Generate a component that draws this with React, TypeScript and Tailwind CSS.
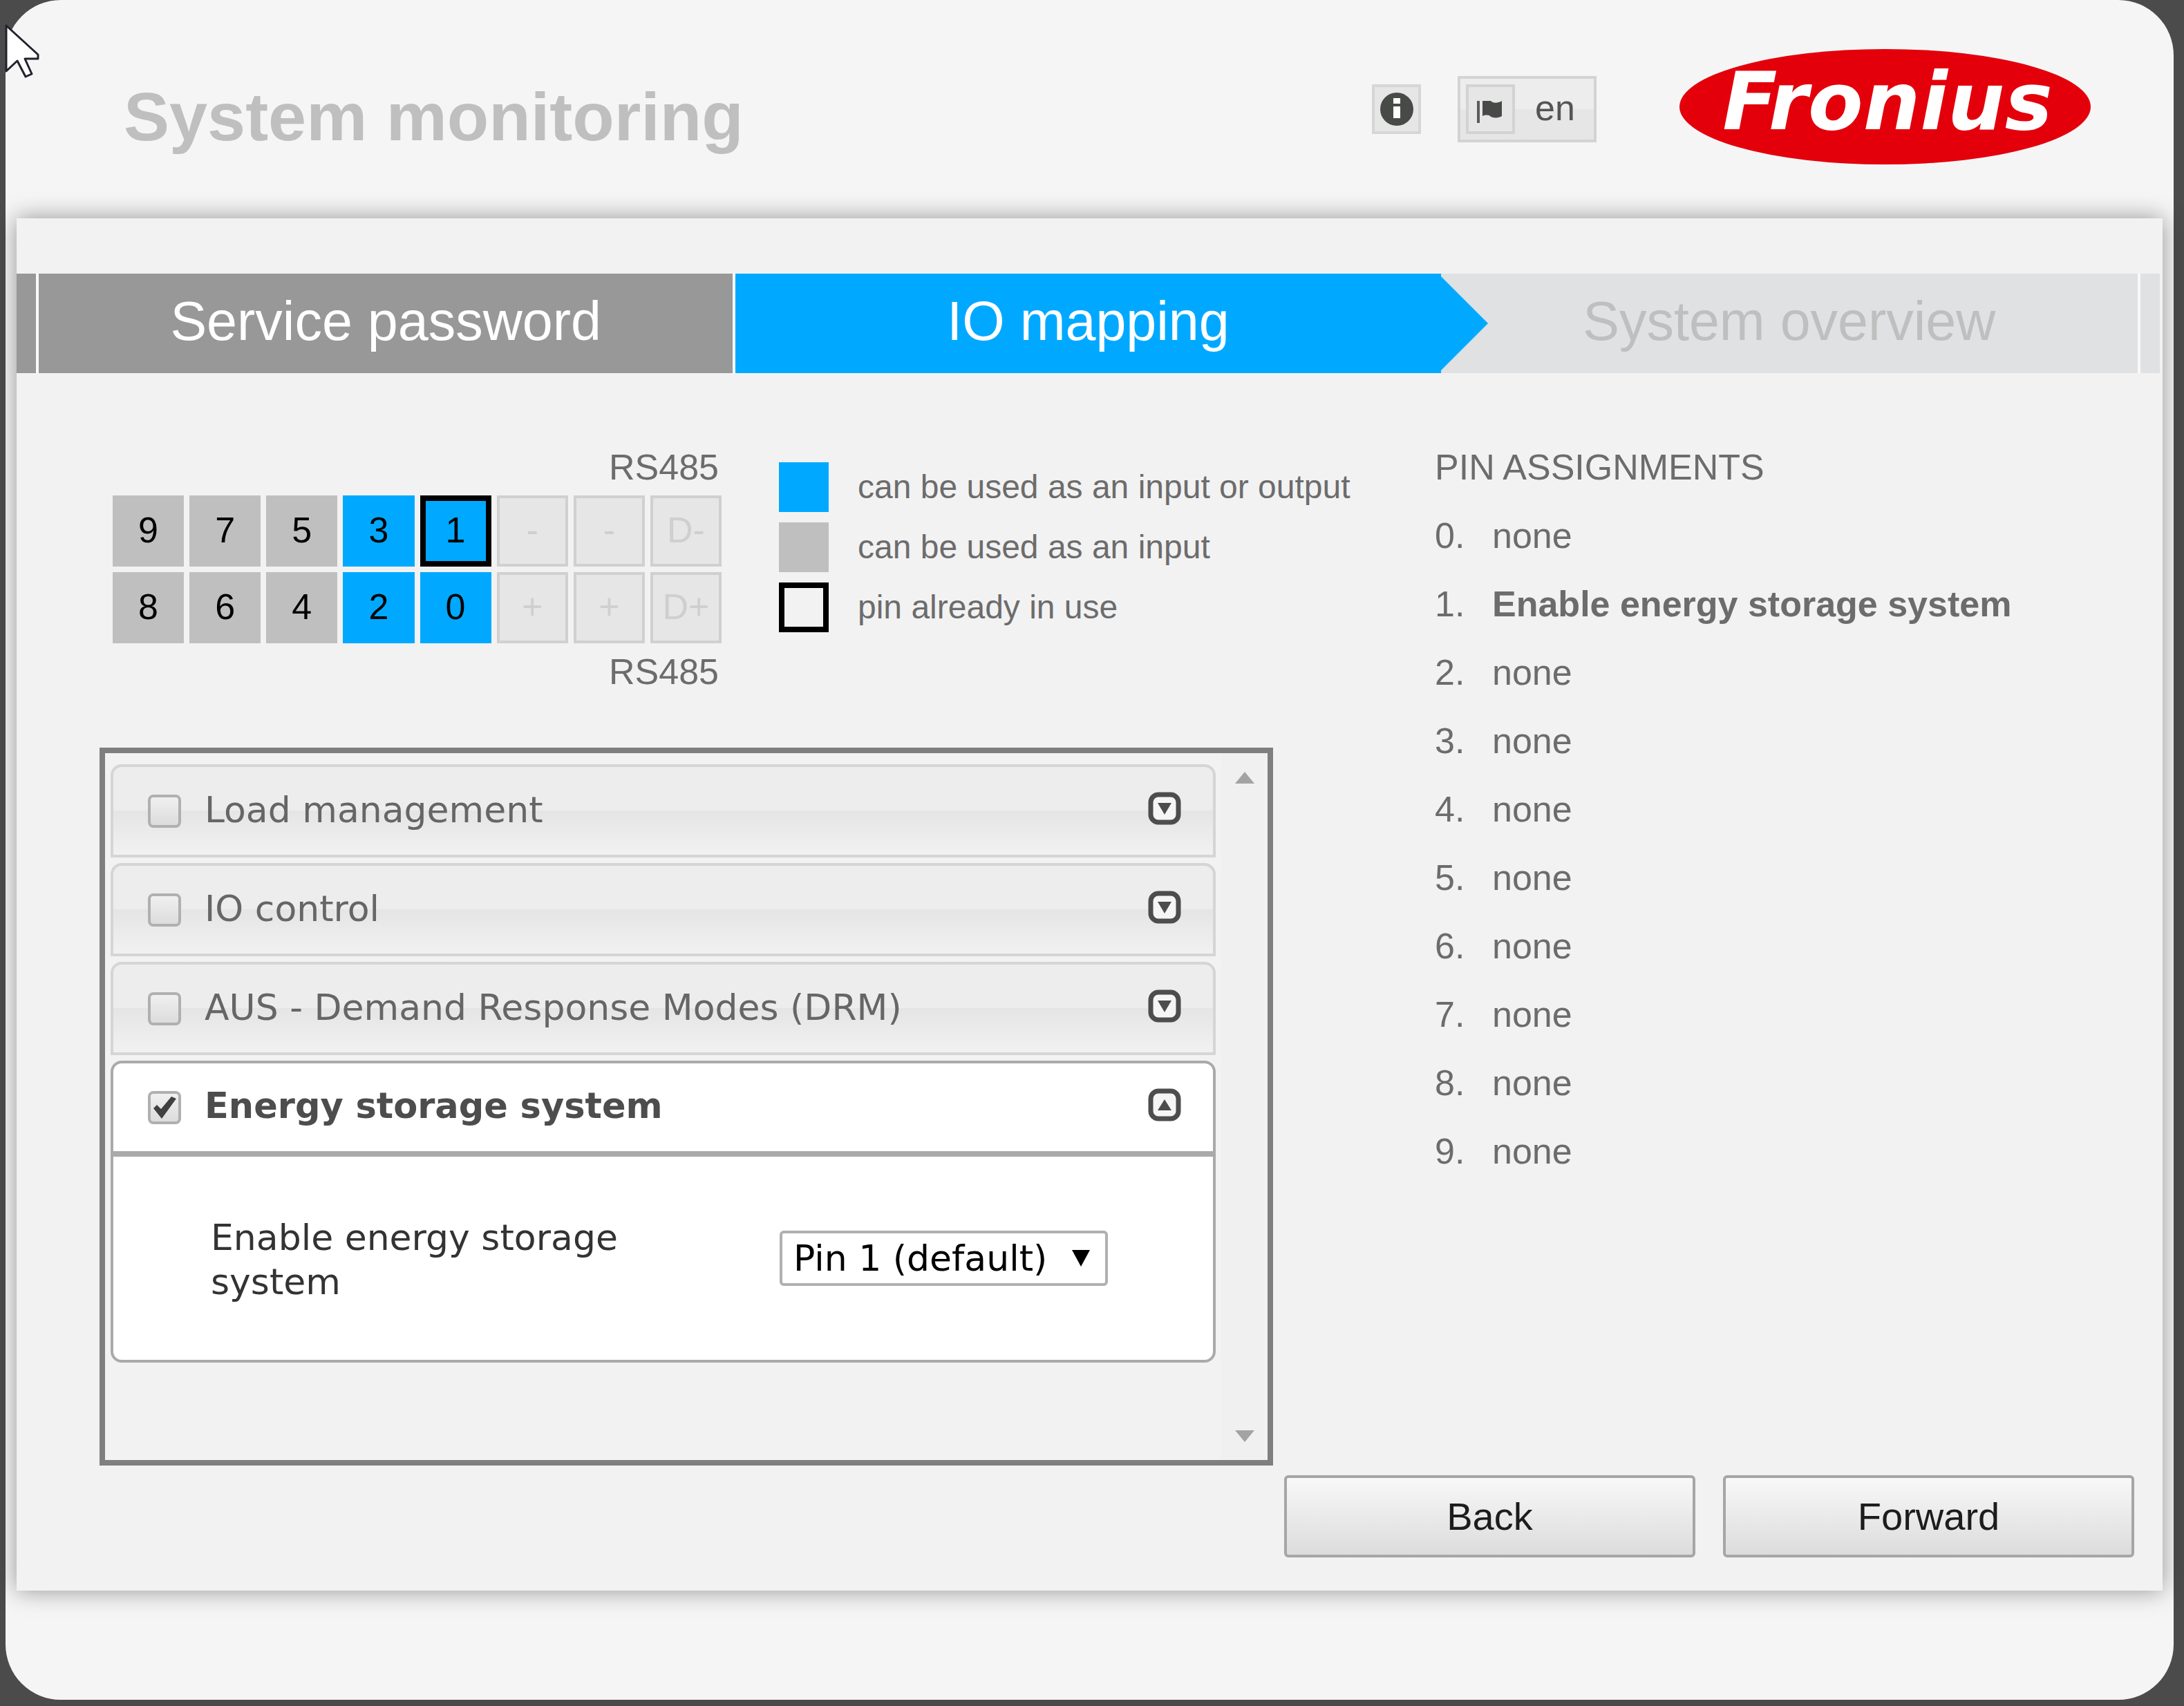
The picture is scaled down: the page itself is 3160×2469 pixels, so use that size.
import React, { useState } from 'react';
import clsx from 'clsx';

type PinKind = 'input' | 'io' | 'disabled';

type Pin = {
  label: string;
  kind: PinKind;
  used?: boolean;
};

const pins: Pin[] = [
  { label: '9', kind: 'input' },
  { label: '7', kind: 'input' },
  { label: '5', kind: 'input' },
  { label: '3', kind: 'io' },
  { label: '1', kind: 'io', used: true },
  { label: '-', kind: 'disabled' },
  { label: '-', kind: 'disabled' },
  { label: 'D-', kind: 'disabled' },
  { label: '8', kind: 'input' },
  { label: '6', kind: 'input' },
  { label: '4', kind: 'input' },
  { label: '2', kind: 'io' },
  { label: '0', kind: 'io' },
  { label: '+', kind: 'disabled' },
  { label: '+', kind: 'disabled' },
  { label: 'D+', kind: 'disabled' }
];

const pinStyles: Record<PinKind, string> = {
  input: 'bg-[#bfbfbf] text-black',
  io: 'bg-[#00a9ff] text-black',
  disabled: 'bg-[#e6e6e6] text-[#cfcfcf] border-4 border-[#d0d0d0]'
};

const legend = [
  { text: 'can be used as an input or output', swatch: 'bg-[#00a9ff]' },
  { text: 'can be used as an input', swatch: 'bg-[#bfbfbf]' },
  { text: 'pin already in use', swatch: 'border-8 border-black' }
];

const assignments = [
  'none',
  'Enable energy storage system',
  'none',
  'none',
  'none',
  'none',
  'none',
  'none',
  'none',
  'none'
];

const sections = [
  { id: 'load', title: 'Load management' },
  { id: 'io', title: 'IO control' },
  { id: 'drm', title: 'AUS - Demand Response Modes (DRM)' },
  { id: 'storage', title: 'Energy storage system' }
];

function Logo() {
  return (
    <svg width="595" height="167" viewBox="0 0 595 167" role="img" aria-label="Fronius">
      <ellipse cx="297.5" cy="83.5" rx="297.5" ry="83.5" fill="#e3000b" />
      <text
        x="301"
        y="116"
        textAnchor="middle"
        fill="#fff"
        className="font-['DejaVu_Sans',sans-serif] text-[116px] font-bold italic"
      >
        Fronius
      </text>
    </svg>
  );
}

function InfoIcon() {
  return (
    <svg width="48" height="48" viewBox="0 0 48 48" aria-hidden="true">
      <circle cx="24" cy="24" r="24" fill="#484a48" />
      <path d="M19 8h10v8H19zM19 20h10v17H19z" fill="#fff" />
    </svg>
  );
}

function FlagIcon() {
  return (
    <svg width="40" height="40" viewBox="0 0 40 40" aria-hidden="true">
      <path d="M0 8h4v32H0z" fill="#5a5c5a" />
      <path d="M8 8h12c2 3 10 4 16 0v22c-4 3-12 3-16 1-2-3-8-3-12-1z" fill="#484a48" />
    </svg>
  );
}

function ToggleIcon({ open }: { open: boolean }) {
  return (
    <svg width="48" height="48" viewBox="0 0 48 48" aria-hidden="true">
      <rect x="4" y="4" width="40" height="40" rx="11" fill="#f5f5f5" stroke="#4d4d4d" strokeWidth="7" />
      <path d={open ? 'M24 16l10 16H14z' : 'M14 16h20L24 33z'} fill="#4d4d4d" />
    </svg>
  );
}

function Header() {
  return (
    <header className="flex h-[316px] items-center pl-[171px] pr-[120px]">
      <h1 className="mr-auto pt-5 text-[99px] leading-none font-bold text-[#bfbfbf]">System monitoring</h1>
      <button
        aria-label="Information"
        className="mr-[53px] flex h-[72px] w-[71px] items-center justify-center border-4 border-[#d6d6d6] bg-[#e6e6e6]"
      >
        <InfoIcon />
      </button>
      <button className="mr-[120px] flex h-24 w-[201px] items-center border-4 border-[#d3d3d3] bg-linear-to-b from-[#ededed] from-50% to-[#e6e6e6] to-50% pl-2">
        <span className="flex h-[72px] w-[71px] items-center justify-center border-4 border-[#d3d3d3] bg-[#e6e6e6]">
          <FlagIcon />
        </span>
        <span className="pb-1 pl-[29px] text-[52px] leading-none text-[#555]">en</span>
      </button>
      <div className="pb-2">
        <Logo />
      </div>
    </header>
  );
}

function Steps() {
  return (
    <nav className="mr-1 flex h-36 bg-[#f9f9f9] text-[79px] leading-none">
      <div className="mr-1 w-7 bg-[#989898]" />
      <div className="mr-1 flex flex-[1004] items-center justify-center bg-[#989898] pb-2 text-white">
        Service password
      </div>
      <div className="relative flex flex-[1020] items-center justify-center bg-[#00a9ff] pb-2 text-white">
        IO mapping
        <svg
          className="absolute top-0 left-full h-full w-[68px]"
          viewBox="0 0 68 144"
          preserveAspectRatio="none"
          aria-hidden="true"
        >
          <path d="M0 4l68 68L0 140z" fill="#00a9ff" />
        </svg>
      </div>
      <div className="mr-1 flex flex-[1008] items-center justify-center bg-[#dfe1e2] pb-2 text-[#bfbfbf]">
        System overview
      </div>
      <div className="w-7 bg-[#dfe1e2]" />
    </nav>
  );
}

function PinMap() {
  return (
    <div className="flex items-start gap-[83px] pl-[19px] text-[#6c6c6c]">
      <div className="w-[881px] text-[52px] leading-[60px]">
        <p className="pr-1 text-right">RS485</p>
        <div className="my-[11px] grid grid-cols-8 gap-2">
          {pins.map((pin, index) => (
            <div
              key={index}
              className={clsx(
                'flex h-[103px] items-center justify-center pb-1',
                pinStyles[pin.kind],
                pin.used && 'border-8 border-black'
              )}
            >
              {pin.label}
            </div>
          ))}
        </div>
        <p className="pr-1 text-right">RS485</p>
      </div>
      <ul className="flex flex-col gap-[15px] pt-[23px] text-[48px] leading-none">
        {legend.map((entry) => (
          <li key={entry.text} className="flex items-center gap-[42px]">
            <span className={clsx('size-[72px] shrink-0', entry.swatch)} />
            {entry.text}
          </li>
        ))}
      </ul>
    </div>
  );
}

function Accordion() {
  const [open, setOpen] = useState('storage');
  const [enabled, setEnabled] = useState<string[]>(['storage']);

  const toggleEnabled = (id: string) => {
    setEnabled(enabled.includes(id) ? enabled.filter((item) => item !== id) : [...enabled, id]);
  };

  return (
    <div className="mt-20 mr-[234px] flex h-[1039px] border-8 border-[#7f7f7f] font-['DejaVu_Sans',sans-serif] text-[52px]">
      <div className="flex flex-1 flex-col gap-2 px-2 pt-4">
        {sections.map((section) => {
          const isOpen = open === section.id;
          return (
            <section key={section.id}>
              <div
                className={clsx(
                  'flex h-[135px] items-center rounded-t-2xl border-4 pr-[46px] pl-[50px]',
                  isOpen
                    ? 'border-[#aaa] bg-white text-[51px] font-bold text-[#4d4d4d]'
                    : 'border-[#d5d5d5] bg-linear-to-b from-[#ededed] from-50% via-[#e5e5e5] via-50% to-[#f1f1f1] text-[#666]'
                )}
              >
                <span className="relative size-12">
                  <input
                    type="checkbox"
                    id={section.id}
                    checked={enabled.includes(section.id)}
                    onChange={() => toggleEnabled(section.id)}
                    className="block size-12 appearance-none rounded-lg border-4 border-[#b0b0b0] bg-linear-to-b from-[#f0f0f0] to-[#dcdcdc]"
                  />
                  {enabled.includes(section.id) && (
                    <svg className="pointer-events-none absolute inset-0" viewBox="0 0 48 48" aria-hidden="true">
                      <path d="M8 25l5-5 6 6L34 8l7 3-21 29z" fill="#404040" />
                    </svg>
                  )}
                </span>
                <label htmlFor={section.id} className="mr-auto pb-1 pl-[34px] leading-none">
                  {section.title}
                </label>
                <button
                  aria-label={section.title}
                  aria-expanded={isOpen}
                  onClick={() => setOpen(isOpen ? '' : section.id)}
                  className="pb-2"
                >
                  <ToggleIcon open={isOpen} />
                </button>
              </div>
              {isOpen && (
                <div className="flex h-[302px] items-center gap-[200px] rounded-b-2xl border-4 border-[#aaa] bg-white pl-[141px]">
                  <label htmlFor="storage-pin" className="w-[623px] pt-1 leading-16 text-[#333]">
                    Enable energy storage system
                  </label>
                  <div className="relative">
                    <select
                      id="storage-pin"
                      className="block h-20 w-[475px] appearance-none rounded-md border-4 border-[#b0b0b0] bg-white pl-4 leading-none text-black"
                    >
                      <option>Pin 1 (default)</option>
                    </select>
                    <svg
                      className="pointer-events-none absolute top-7 right-[26px] h-6 w-[26px]"
                      viewBox="0 0 26 24"
                      aria-hidden="true"
                    >
                      <path d="M0 0h26L13 24z" fill="#000" />
                    </svg>
                  </div>
                </div>
              )}
            </section>
          );
        })}
      </div>
      <div className="flex w-[67px] flex-col items-center justify-between bg-[#f0f0f0] pt-[27px] pb-[26px]">
        <svg width="28" height="17" viewBox="0 0 28 17" aria-hidden="true">
          <path d="M14 0l14 17H0z" fill="#a3a3a3" />
        </svg>
        <svg width="28" height="17" viewBox="0 0 28 17" aria-hidden="true">
          <path d="M0 0h28L14 17z" fill="#a3a3a3" />
        </svg>
      </div>
    </div>
  );
}

function Assignments() {
  return (
    <div className="w-[1053px] text-[52px] text-[#6c6c6c]">
      <h2 className="leading-[60px]">PIN ASSIGNMENTS</h2>
      <ol className="pt-5 leading-[99px]">
        {assignments.map((name, index) => (
          <li key={index} className="flex">
            <span className="w-[83px]">{index}.</span>
            <span className={clsx(name !== 'none' && 'font-bold')}>{name}</span>
          </li>
        ))}
      </ol>
    </div>
  );
}

function NavButton({ children }: { children: React.ReactNode }) {
  return (
    <button className="h-[119px] w-[595px] rounded-md border-4 border-[#a6a6a6] bg-linear-to-b from-[#f8f8f8] to-[#dcdcdc] text-[56px] leading-none text-[#1c1c1c]">
      {children}
    </button>
  );
}

export default function App() {
  return (
    <div className="relative min-h-screen bg-[#4b4b4b] pr-[15px] pb-[9px] pl-2 font-['Liberation_Sans',Arial,sans-serif]">
      <div className="rounded-[80px] bg-[#f5f5f5] pb-[158px]">
        <Header />
        <main className="mx-4 bg-[#f2f2f2] pt-20 shadow-[0_0_32px_rgba(0,0,0,0.4)]">
          <Steps />
          <div className="flex pt-[106px] pl-[120px]">
            <div className="flex-1">
              <PinMap />
              <Accordion />
            </div>
            <Assignments />
          </div>
          <div className="flex justify-end gap-10 pt-[14px] pr-[41px] pb-12">
            <NavButton>Back</NavButton>
            <NavButton>Forward</NavButton>
          </div>
        </main>
      </div>

      {/* Mouse pointer */}
      <svg
        className="pointer-events-none absolute top-[34px] left-[6px]"
        width="54"
        height="80"
        viewBox="0 0 54 80"
        aria-hidden="true"
      >
        <path
          d="M3 3v66l16-15 12 23 9-4-10-22h19v-6z"
          fill="#fff"
          stroke="#22222c"
          strokeWidth="3"
          strokeLinejoin="round"
        />
      </svg>
    </div>
  );
}
